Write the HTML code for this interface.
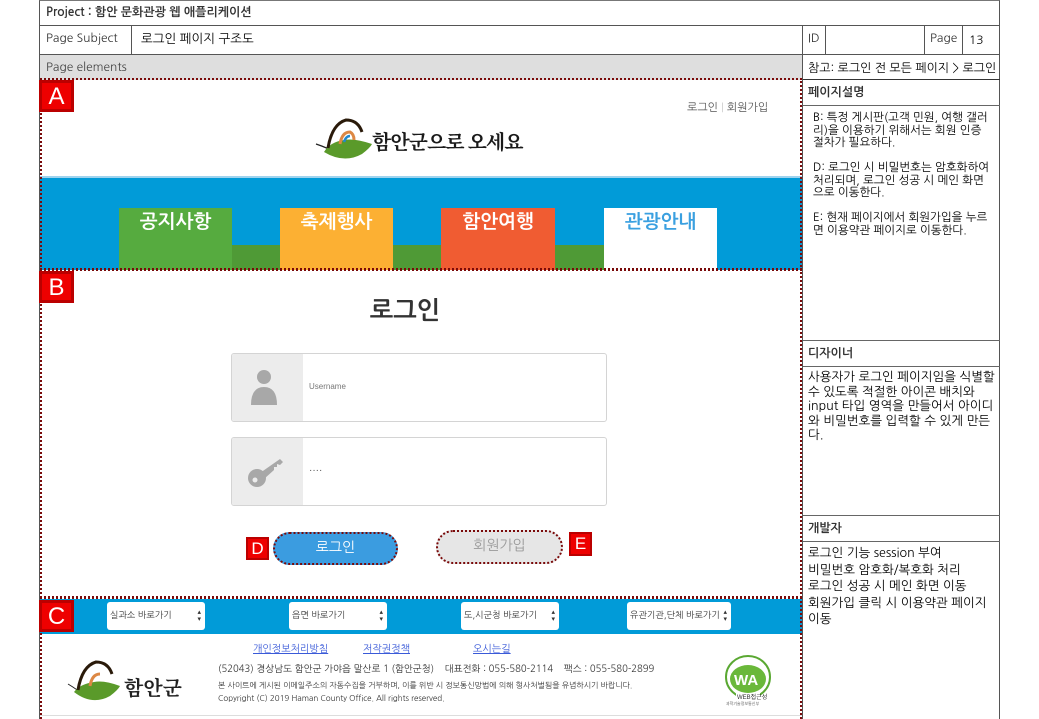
<!DOCTYPE html>
<html style="width:1039px;height:719px;overflow:hidden"><head><meta charset="utf-8"><style>
*{margin:0;padding:0;box-sizing:border-box}
body{width:1039px;height:719px;background:#fff;position:relative;overflow:hidden;font-family:"Liberation Sans","Noto Sans CJK KR",sans-serif;color:#000}
.a{position:absolute}
.t{font-family:"NanumGothic","Noto Sans CJK KR",sans-serif}
.lbl{position:absolute;width:35px;height:32px;background:#e00;border:3px solid #b00;color:#fff;font-size:24px;text-align:center;line-height:27px;font-family:"Liberation Sans",sans-serif}
.sel{position:absolute;top:602px;height:28px;background:#fff;border-radius:3px;font-size:9px;color:#333;line-height:28px;padding-left:3px}
.sel:after{content:"▴\A▾";white-space:pre;position:absolute;right:4px;top:7px;font-size:7px;line-height:7px}
.rt{font-size:11.5px;line-height:12.5px}
</style></head><body>
<div class="a" style="left:39px;top:0;width:961px;height:719px;border-left:1px solid #555;border-right:1px solid #555;border-top:1px solid #777"></div>
<div class="a" style="left:39px;top:25px;width:961px;height:1px;background:#555"></div>
<div class="a" style="left:39px;top:54px;width:961px;height:1px;background:#555"></div>
<div class="a" style="left:40px;top:55px;width:762px;height:25px;background:#dedede"></div>
<div class="a" style="left:131px;top:25px;width:1px;height:29px;background:#555"></div>
<div class="a" style="left:802px;top:25px;width:1px;height:694px;background:#555"></div>
<div class="a" style="left:825px;top:25px;width:1px;height:29px;background:#555"></div>
<div class="a" style="left:924px;top:25px;width:1px;height:29px;background:#555"></div>
<div class="a" style="left:962px;top:25px;width:1px;height:29px;background:#555"></div>
<div class="a t" style="left:46px;top:6px;font-size:12px;font-weight:bold;color:#333">Project : 함안 문화관광 웹 애플리케이션</div>
<div class="a t" style="left:46px;top:31px;font-size:12px;color:#333">Page Subject</div>
<div class="a t" style="left:141px;top:31px;font-size:12.5px">로그인 페이지 구조도</div>
<div class="a t" style="left:808px;top:31px;font-size:12px;color:#333">ID</div>
<div class="a t" style="left:930px;top:31px;font-size:12px;color:#333">Page</div>
<div class="a t" style="left:969px;top:33px;font-size:12px">13</div>
<div class="a t" style="left:46px;top:60px;font-size:12px;color:#444">Page elements</div>
<div class="a" style="left:803px;top:79px;width:197px;height:1px;background:#333"></div>
<div class="a" style="left:803px;top:105px;width:197px;height:1px;background:#666"></div>
<div class="a" style="left:803px;top:340px;width:197px;height:1px;background:#666"></div>
<div class="a" style="left:803px;top:366px;width:197px;height:1px;background:#666"></div>
<div class="a" style="left:803px;top:515px;width:197px;height:1px;background:#666"></div>
<div class="a" style="left:803px;top:541px;width:197px;height:1px;background:#666"></div>
<div class="a t" style="left:808px;top:61px;font-size:12px">참고: 로그인 전 모든 페이지 &gt; 로그인</div>
<div class="a t" style="left:808px;top:86px;font-size:12px;font-weight:bold;color:#333">페이지설명</div>
<div class="a t rt" style="left:813px;top:111px;width:180px">B: 특정 게시판(고객 민원, 여행 갤러리)을 이용하기 위해서는 회원 인증 절차가 필요하다.<br><br>D: 로그인 시 비밀번호는 암호화하여 처리되며, 로그인 성공 시 메인 화면으로 이동한다.<br><br>E: 현재 페이지에서 회원가입을 누르면 이용약관 페이지로 이동한다.</div>
<div class="a t" style="left:808px;top:347px;font-size:12px;font-weight:bold;color:#333">디자이너</div>
<div class="a t" style="left:808px;top:370px;width:188px;font-size:12.5px;line-height:14.5px">사용자가 로그인 페이지임을 식별할 수 있도록 적절한 아이콘 배치와 input 타입 영역을 만들어서 아이디와 비밀번호를 입력할 수 있게 만든다.</div>
<div class="a t" style="left:808px;top:522px;font-size:12px;font-weight:bold;color:#333">개발자</div>
<div class="a t" style="left:808px;top:545px;width:190px;font-size:12.5px;line-height:16.5px">로그인 기능 session 부여<br>비밀번호 암호화/복호화 처리<br>로그인 성공 시 메인 화면 이동<br>회원가입 클릭 시 이용약관 페이지 이동</div>
<div class="a t" style="left:687px;top:101px;font-size:11px;color:#555">로그인 <span style="color:#ccc">|</span> 회원가입</div>
<svg class="a" style="left:314px;top:118px" width="60" height="46" viewBox="0 0 60 46">
<path d="M2 26 Q14 30 20 34" stroke="#222" fill="none" stroke-width="1.2"/>
<path d="M10 34 Q30 46 48 36 Q56 30 58 26 Q40 20 30 22 Q16 24 10 34Z" fill="#5a9a2a"/>
<path d="M14 30 Q18 6 32 2 Q44 2 48 14" stroke="#2a1a0a" fill="none" stroke-width="3"/>
<path d="M26 26 Q28 14 36 14 Q40 16 40 22" stroke="#d84" fill="none" stroke-width="3"/>
<path d="M30 24 Q32 18 36 18" stroke="#28c" fill="none" stroke-width="2.5"/>
</svg>
<div class="a" style="left:372px;top:126px;font-size:20px;font-weight:bold;font-family:'Noto Serif CJK SC','WenQuanYi Zen Hei',serif;color:#1a1a1a;letter-spacing:-1px">함안군으로 오세요</div>
<div class="a" style="left:40px;top:176px;width:762px;height:2px;background:#9fd3ee"></div>
<div class="a" style="left:40px;top:178px;width:762px;height:92px;background:#019bd8"></div>
<div class="a" style="left:232px;top:245px;width:372px;height:25px;background:#4f9a36"></div>
<div class="a t" style="left:119px;top:208px;width:113px;height:62px;background:#56ab3f;color:#fff;font-size:19px;font-weight:bold;text-align:center;padding-top:4px">공지사항</div>
<div class="a t" style="left:280px;top:208px;width:113px;height:62px;background:#fcb033;color:#fff;font-size:19px;font-weight:bold;text-align:center;padding-top:4px">축제행사</div>
<div class="a" style="left:393px;top:245px;width:48px;height:25px;background:#4f9a36"></div>
<div class="a t" style="left:441px;top:208px;width:114px;height:62px;background:#f05c32;color:#fff;font-size:19px;font-weight:bold;text-align:center;padding-top:4px">함안여행</div>
<div class="a t" style="left:604px;top:208px;width:113px;height:62px;background:#fff;color:#3aa0e0;font-size:19px;font-weight:bold;text-align:center;padding-top:4px">관광안내</div>
<div class="a t" style="left:340px;top:298px;width:130px;text-align:center;font-size:25px;font-weight:bold;color:#333">로그인</div>
<div class="a" style="left:231px;top:353px;width:376px;height:69px;border:1px solid #d4d4d4;border-radius:3px;overflow:hidden"><div style="width:71px;height:100%;background:#ececec"></div></div>
<svg class="a" style="left:250px;top:367px" width="30" height="40"><circle cx="14" cy="10" r="7" fill="#a8a8a8"/><path d="M1 38 Q1 20 14 20 Q27 20 27 38Z" fill="#a8a8a8"/></svg>
<div class="a" style="left:309px;top:382px;font-size:8px;color:#777">Username</div>
<div class="a" style="left:231px;top:437px;width:376px;height:69px;border:1px solid #d4d4d4;border-radius:3px;overflow:hidden"><div style="width:71px;height:100%;background:#ececec"></div></div>
<svg class="a" style="left:246px;top:453px" width="40" height="36" viewBox="0 0 40 36"><circle cx="11" cy="25" r="9" fill="#a8a8a8"/><path d="M14 20 L34 6 L37 9 L34 12 L31 11 L31 14 L28 14 L28 17 L18 26Z" fill="#a8a8a8"/><circle cx="9" cy="27" r="2.5" fill="#ececec"/></svg>
<div class="a" style="left:309px;top:465px;font-size:10px;color:#555">····</div>
<div class="a t" style="left:273px;top:532px;width:125px;height:33px;background:#3b9ce0;border-radius:17px;border:2px dotted #7a0a0a;color:#fff;font-size:14px;text-align:center;line-height:28px">로그인</div>
<div class="a t" style="left:436px;top:530px;width:127px;height:34px;background:#e6e6e6;border-radius:17px;border:2px dotted #7a0a0a;color:#999;font-size:14px;text-align:center;line-height:29px">회원가입</div>
<div class="a" style="left:246px;top:537px;width:23px;height:23px;background:#e00;border:2px solid #b00;color:#fff;font-size:17px;text-align:center;line-height:19px">D</div>
<div class="a" style="left:569px;top:532px;width:23px;height:24px;background:#e00;border:2px solid #b00;color:#fff;font-size:17px;text-align:center;line-height:20px">E</div>
<div class="a" style="left:40px;top:599px;width:762px;height:35px;background:#019bd8"></div>
<div class="sel t" style="left:107px;width:98px">실과소 바로가기</div>
<div class="sel t" style="left:289px;width:98px">읍면 바로가기</div>
<div class="sel t" style="left:461px;width:98px">도,시군청 바로가기</div>
<div class="sel t" style="left:627px;width:104px">유관기관,단체 바로가기</div>
<div class="a t" style="left:253px;top:643px;font-size:10px;color:#3a5ad8;text-decoration:underline">개인정보처리방침</div>
<div class="a t" style="left:363px;top:643px;font-size:10px;color:#3a5ad8;text-decoration:underline">저작권정책</div>
<div class="a t" style="left:473px;top:643px;font-size:10px;color:#3a5ad8;text-decoration:underline">오시는길</div>
<svg class="a" style="left:64px;top:660px" width="60" height="44" viewBox="0 0 60 44"><path d="M4 24 Q14 30 18 34" stroke="#222" fill="none"/><path d="M10 32 Q28 46 46 36 Q54 30 56 26 Q40 20 30 22 Q16 24 10 32Z" fill="#5a9a2a"/><path d="M14 30 Q18 6 32 2 Q44 2 48 14" stroke="#2a1a0a" fill="none" stroke-width="3"/><path d="M26 26 Q28 14 36 14" stroke="#d84" fill="none" stroke-width="3"/></svg>
<div class="a" style="left:124px;top:672px;font-size:20px;font-weight:bold;font-family:'Noto Serif CJK SC',serif;color:#222">함안군</div>
<div class="a t" style="left:218px;top:664px;font-size:9.5px;color:#333">(52043) 경상남도 함안군 가야읍 말산로 1 (함안군청) &nbsp;&nbsp;&nbsp;대표전화 : 055-580-2114 &nbsp;&nbsp;&nbsp;팩스 : 055-580-2899</div>
<div class="a t" style="left:218px;top:681px;font-size:7.8px;color:#333">본 사이트에 게시된 이메일주소의 자동수집을 거부하며, 이를 위반 시 정보통신망법에 의해 형사처벌됨을 유념하시기 바랍니다.</div>
<div class="a t" style="left:218px;top:694px;font-size:8px;color:#333">Copyright (C) 2019 Haman County Office. All rights reserved.</div>
<svg class="a" style="left:712px;top:653px" width="72" height="56"><ellipse cx="36" cy="24" rx="22" ry="21" fill="none" stroke="#5aa832" stroke-width="2"/><ellipse cx="36" cy="26" rx="18" ry="14" fill="#6ab83a"/><text x="22" y="32" font-size="15" font-weight="bold" fill="#fff" font-family="Liberation Sans">WA</text><rect x="24" y="40" width="24" height="6" fill="#fff"/><text x="25" y="46" font-size="6" fill="#333">WEB접근성</text><text x="14" y="52" font-size="4" fill="#666">과학기술정보통신부</text></svg>
<div class="a" style="left:40px;top:715px;width:762px;height:1px;background:#ddd"></div>
<div class="a" style="left:40px;top:78px;width:762px;height:192px;border:2px dotted #7a0a0a"></div>
<div class="a" style="left:40px;top:269px;width:762px;height:329px;border:2px dotted #7a0a0a"></div>
<div class="a" style="left:40px;top:597px;width:762px;height:122px;border:2px dotted #7a0a0a;border-bottom:none"></div>
<div class="lbl" style="left:39px;top:80px">A</div>
<div class="lbl" style="left:39px;top:271px">B</div>
<div class="lbl" style="left:39px;top:600px">C</div>
</body></html>
